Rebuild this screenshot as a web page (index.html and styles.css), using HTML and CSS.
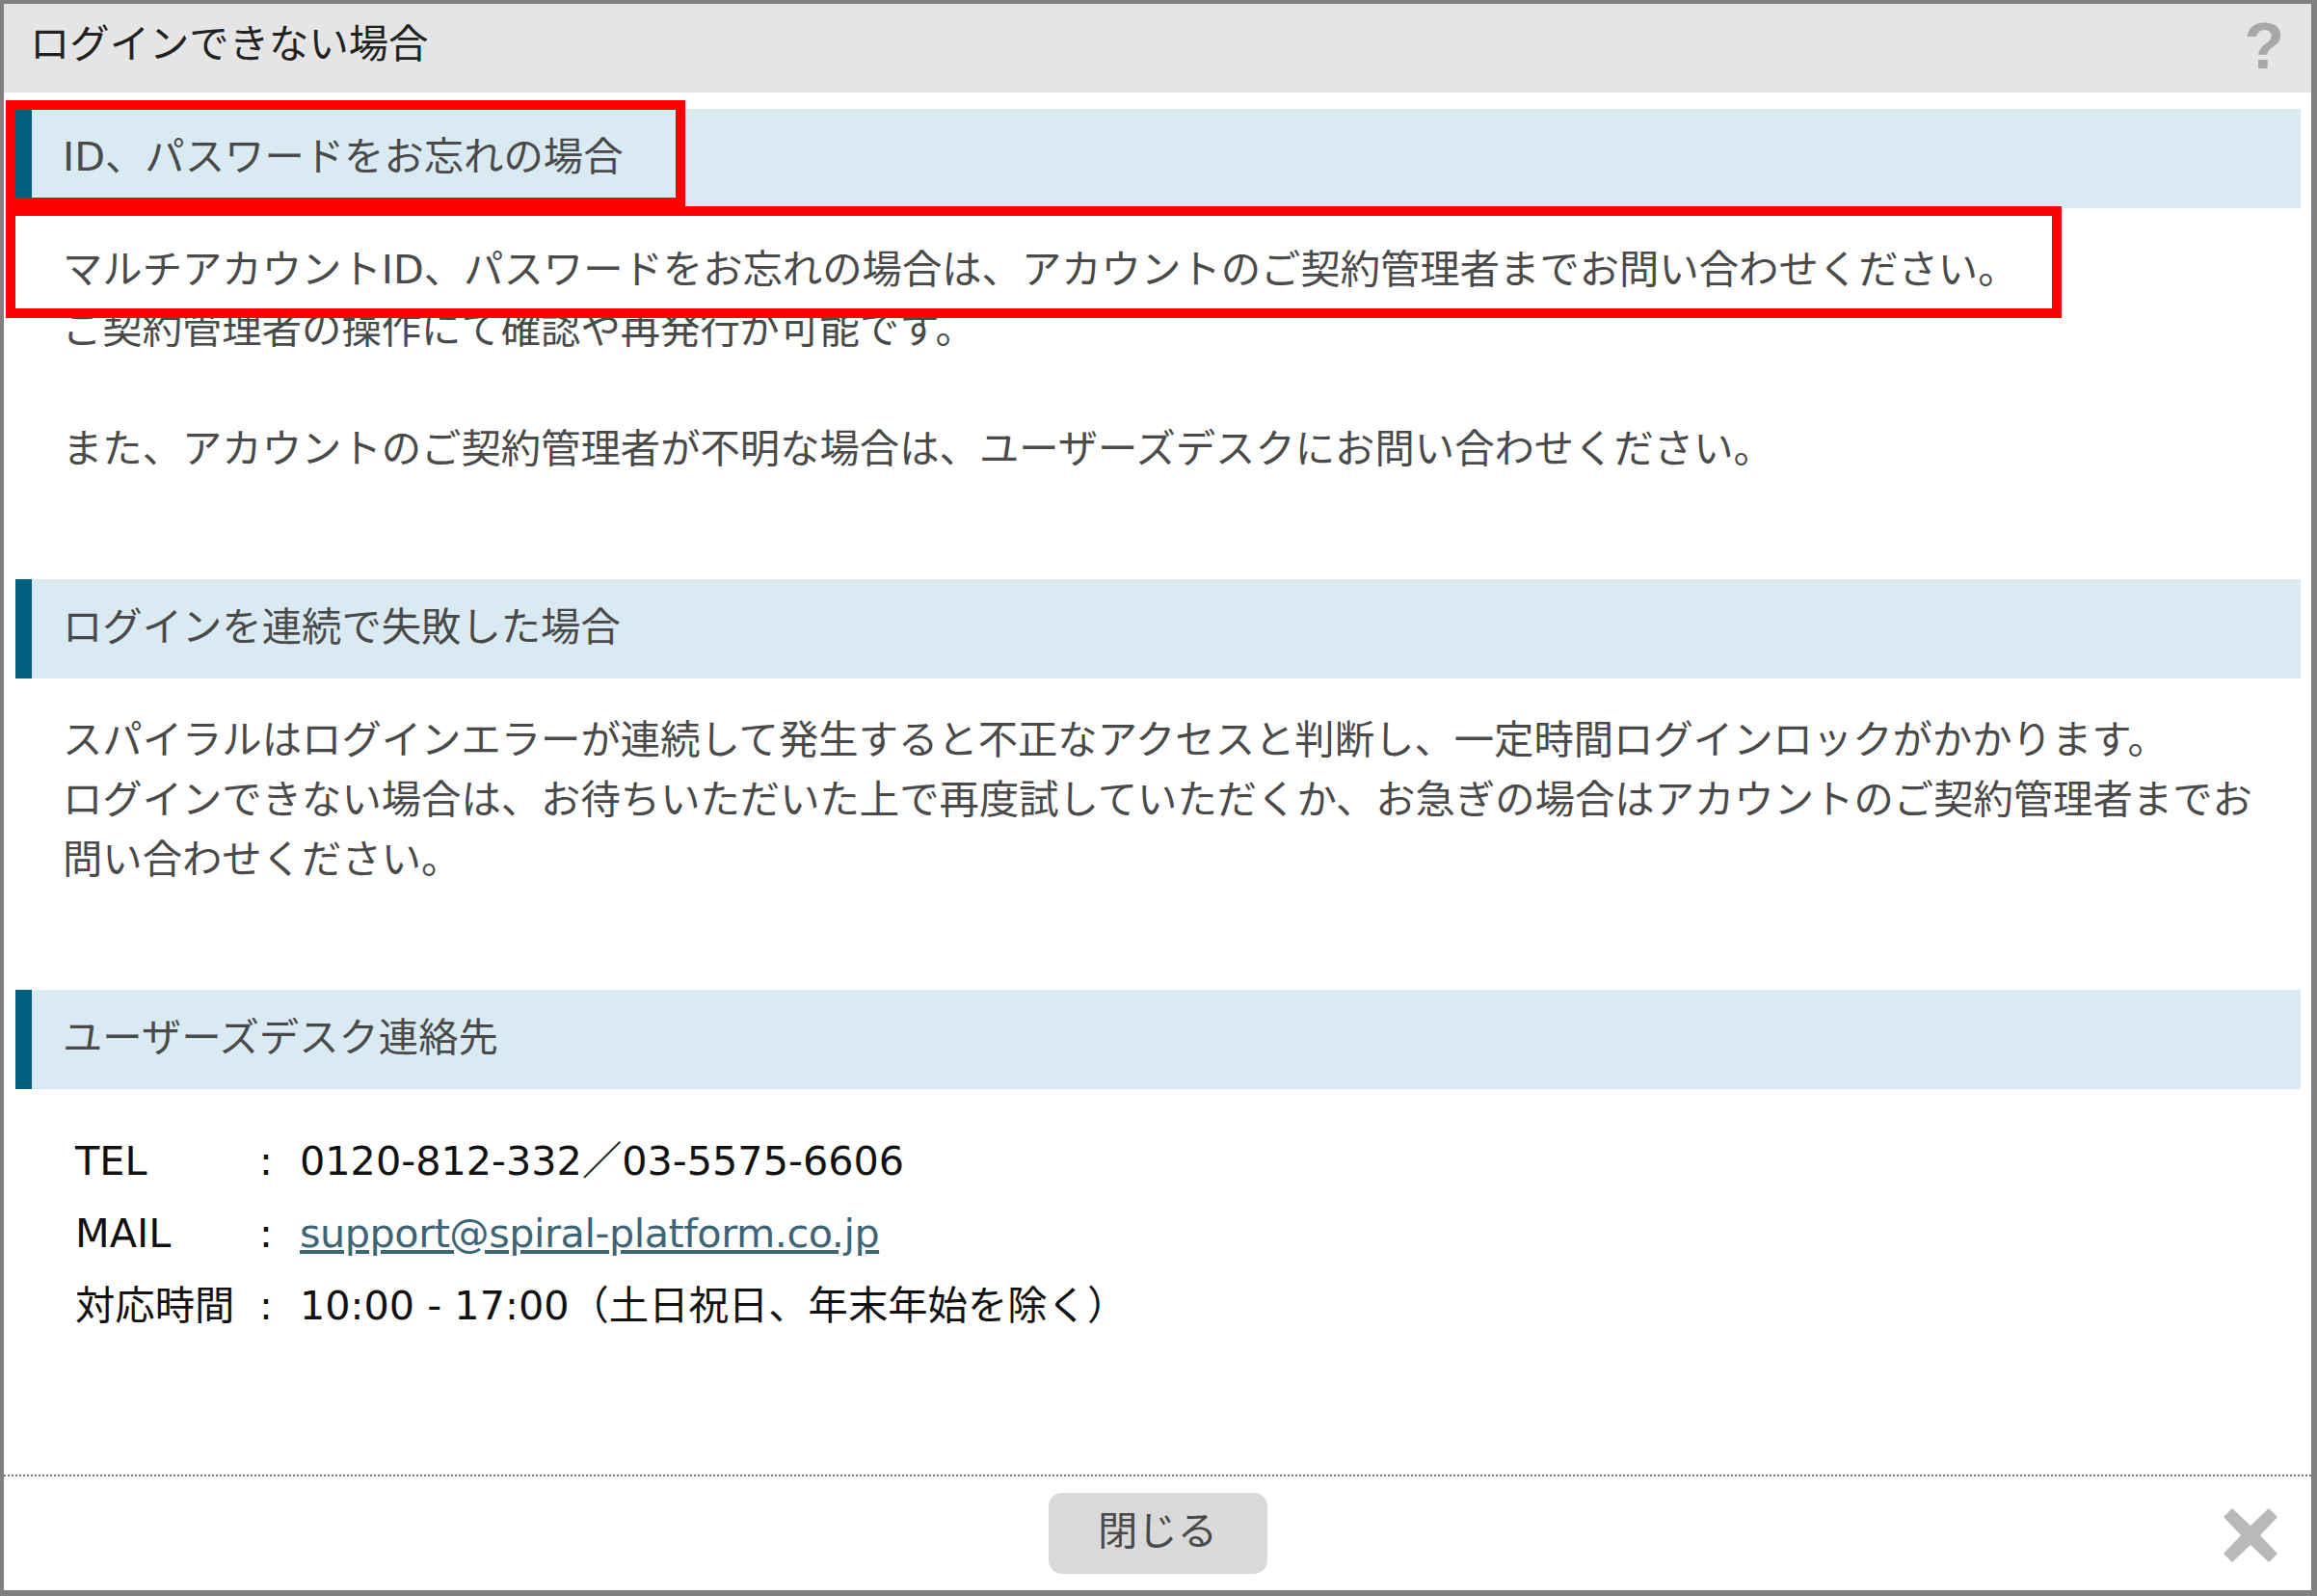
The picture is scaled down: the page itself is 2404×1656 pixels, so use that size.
FILE: index.html
```html
<!DOCTYPE html>
<html lang="ja">
<head>
<meta charset="utf-8">
<title>ログインできない場合</title>
<link rel="stylesheet" href="styles.css">
</head>
<body>
<div class="dialog">
  <header class="dialog-head">
    <h1 class="dialog-title">ログインできない場合</h1>
    <span class="help-mark">?</span>
  </header>
  <main class="dialog-body">
    <section class="section">
      <h2 class="section-title">ID、パスワードをお忘れの場合<span class="mark-title"></span></h2>
      <div class="section-text section-text-first">
        <p class="mark-line">マルチアカウントID、パスワードをお忘れの場合は、アカウントのご契約管理者までお問い合わせください。</p>
        <p class="line">ご契約管理者の操作にて確認や再発行が可能です。</p>
        <p class="line line-blank"></p>
        <p class="line">また、アカウントのご契約管理者が不明な場合は、ユーザーズデスクにお問い合わせください。</p>
      </div>
    </section>
    <section class="section">
      <h2 class="section-title">ログインを連続で失敗した場合</h2>
      <div class="section-text">
        <p class="line">スパイラルはログインエラーが連続して発生すると不正なアクセスと判断し、一定時間ログインロックがかかります。</p>
        <p class="line">ログインできない場合は、お待ちいただいた上で再度試していただくか、お急ぎの場合はアカウントのご契約管理者までお問い合わせください。</p>
      </div>
    </section>
    <section class="section">
      <h2 class="section-title">ユーザーズデスク連絡先</h2>
      <dl class="contact">
        <dt>TEL</dt><dd class="colon">:</dd><dd>0120-812-332／03-5575-6606</dd>
        <dt>MAIL</dt><dd class="colon">:</dd><dd><a class="mail" href="#">support@spiral-platform.co.jp</a></dd>
        <dt>対応時間</dt><dd class="colon">:</dd><dd>10:00 - 17:00（土日祝日、年末年始を除く）</dd>
      </dl>
    </section>
  </main>
  <footer class="dialog-foot">
    <button class="close-button" type="button">閉じる</button>
    <svg class="close-icon" viewBox="0 0 56 56" aria-hidden="true"><path d="M9 0 28 18 47 0 56 9 38 28 56 47 47 56 28 38 9 56 0 47 18 28 0 9Z"/></svg>
  </footer>
</div>
</body>
</html>
```

FILE: styles.css
```css
* { box-sizing: border-box; }
html, body { margin: 0; padding: 0; background: #fff; }
body { font-family: "DejaVu Sans", "Noto Sans CJK JP", sans-serif; font-size: 41.35px; color: #444; }
.dialog { position: relative; width: 2404px; height: 1656px; display: flex; flex-direction: column; border-style: solid; border-color: #808080; border-width: 4px 6px 6px 4px; background: #fff; }
.dialog-head { height: 92px; flex: none; display: flex; justify-content: space-between; align-items: center; padding: 0 28px 0 27px; background: #e5e5e5; }
.dialog-title { margin: 0 0 8px; font-size: 41.35px; font-weight: 400; line-height: 62px; color: #222; }
.help-mark { margin-bottom: 6px; font-family: "Liberation Sans", sans-serif; font-weight: 700; font-size: 68px; line-height: 1; color: #a8a8a8; }
.dialog-body { flex: 1; padding: 17px 11px 0 12px; }
.section-title { position: relative; height: 103px; margin: 0; padding-left: 32px; border-left: 17px solid #005f7f; background: #daeaf2; font-size: 41.35px; font-weight: 400; line-height: 101px; color: #4a4a4a; }
.mark-title { position: absolute; left: -27px; top: -9px; width: 705px; height: 111px; border: 10px solid #f00; }
.section-text { margin: 0; padding: 33px 20px 104px 49px; }
.section-text-first { padding-top: 0; position: relative; }
.line { margin: 0; line-height: 62px; min-height: 62px; font-weight: 400; color: #4a4a4a; }
.line-blank { height: 62px; }
.mark-line { position: relative; z-index: 1; margin: -2px 0 -19px -59px; height: 116px; width: 2133px; padding: 25px 0 0 49px; border: 10px solid #f00; background: #fff; line-height: 62px; font-weight: 400; color: #4a4a4a; white-space: nowrap; }
.contact { display: grid; grid-template-columns: 198px 35px 1fr; grid-auto-rows: 75px; align-items: center; margin: 37px 0 0 62px; font-weight: 400; line-height: 62px; color: #111; }
.contact dt, .contact dd { margin: 0; }
.contact .colon { margin-left: -7px; }
.mail { color: #3d6577; text-decoration: underline; letter-spacing: -0.48px; }
.dialog-foot { position: relative; flex: none; height: 120px; display: flex; justify-content: center; align-items: flex-start; padding-top: 17px; border-top: 2px dotted #777; }
.close-button { width: 227px; height: 84px; padding: 0 0 12px; border: none; border-radius: 14px; background: #d9d9d9; font: 400 41.35px "Noto Sans CJK JP", sans-serif; color: #4a4a4a; }
.close-icon { position: absolute; right: 35px; top: 33px; width: 56px; height: 56px; fill: #b9b9b9; }
```
